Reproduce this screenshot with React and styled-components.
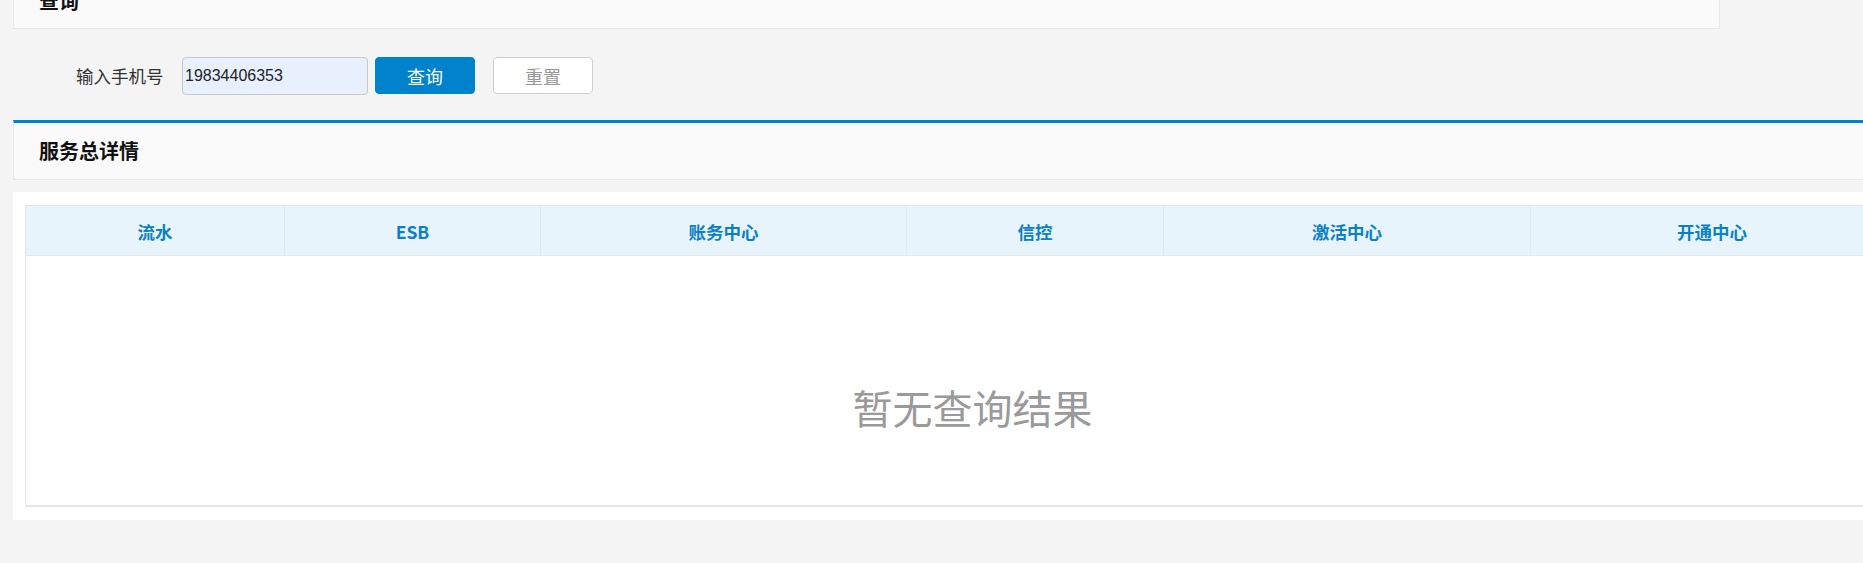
import React from "react";
import styled, { createGlobalStyle } from "styled-components";

const Global = createGlobalStyle`
  html, body { margin: 0; padding: 0; background: #f4f4f4; overflow: hidden; }
  body { font-family: "Liberation Sans", "Noto Sans CJK SC", sans-serif; }
  #root { width: 1863px; height: 563px; overflow: hidden; }
`;

const Page = styled.div`
  padding-left: 13px;
  width: 1900px;
  display: flex;
  flex-direction: column;
  align-items: flex-start;
`;

const Panel = styled.div`
  box-sizing: border-box;
  width: ${(p) => p.$width}px;
  height: ${(p) => p.$height}px;
  margin-top: ${(p) => p.$offset || 0}px;
  background: #fafafa;
  border: 1px solid #e8e8e8;
  border-top: 3px solid ${(p) => (p.$accent ? "#0081cc" : "#e8e8e8")};
  display: flex;
  align-items: center;
  padding-left: 25px;
`;

const PanelTitle = styled.h2`
  margin: 0;
  font-family: "Noto Sans CJK SC", sans-serif;
  font-size: 20px;
  line-height: 24px;
  font-weight: 700;
  color: #111;
`;

const FormRow = styled.div`
  height: 91px;
  display: flex;
  align-items: flex-start;
  padding-top: 28px;
  box-sizing: border-box;
`;

const Label = styled.label`
  margin-left: 63px;
  width: 106px;
  font-family: "Noto Sans CJK SC", sans-serif;
  font-size: 17.5px;
  line-height: 38px;
  color: #333;
`;

const Input = styled.input`
  box-sizing: border-box;
  width: 186px;
  height: 38px;
  margin: 0;
  padding: 0 2px;
  background: #e8f0fe;
  border: 1px solid #c8c8c8;
  border-radius: 4px;
  font-family: "Liberation Sans", sans-serif;
  font-size: 16px;
  color: #222;
  outline: none;
`;

const Button = styled.button`
  box-sizing: border-box;
  width: 100px;
  height: 37px;
  margin-left: ${(p) => p.$gap}px;
  border-radius: 4px;
  font-family: "Noto Sans CJK SC", sans-serif;
  font-size: 18px;
  line-height: 1;
  cursor: pointer;
  background: ${(p) => (p.$primary ? "#0083cc" : "#fff")};
  color: ${(p) => (p.$primary ? "#fff" : "#999")};
  border: 1px solid ${(p) => (p.$primary ? "#0083cc" : "#cfcfcf")};
`;

const Card = styled.div`
  box-sizing: border-box;
  margin-top: 12px;
  width: 1893px;
  background: #fff;
  padding: 13px 12px 13px 12px;
`;

const Table = styled.div`
  box-sizing: border-box;
  width: 1869px;
  border: 1px solid #e6e6e6;
  border-bottom: 2px solid #e6e6e6;
`;

const HeadRow = styled.div`
  display: grid;
  grid-template-columns: 258px 256px 366px 257px 367px 1fr;
  height: 49px;
  background: #e8f4fb;
  border-bottom: 1px solid #e3e8eb;
`;

const HeadCell = styled.div`
  display: flex;
  align-items: center;
  justify-content: center;
  padding-top: 2px;
  box-sizing: border-box;
  font-family: "Noto Sans CJK SC", sans-serif;
  font-size: 17.5px;
  font-weight: 700;
  color: #0a80c8;
  border-left: ${(p) => (p.$first ? "none" : "1px solid #dfe9ef")};
`;

const Empty = styled.div`
  height: 249px;
  box-sizing: border-box;
  padding-top: 126px;
  padding-left: 26px;
  text-align: center;
  font-family: "Noto Sans CJK SC", sans-serif;
  font-size: 40px;
  line-height: 50px;
  color: #9a9a9a;
`;

const columns = ["流水", "ESB", "账务中心", "信控", "激活中心", "开通中心"];

export default function App() {
  return (
    <>
      <Global />
      <Page>
        <Panel $width={1707} $height={58} $offset={-29}>
          <PanelTitle>查询</PanelTitle>
        </Panel>
        <FormRow>
          <Label>输入手机号</Label>
          <Input defaultValue="19834406353" />
          <Button $primary $gap={7}>查询</Button>
          <Button $gap={18}>重置</Button>
        </FormRow>
        <Panel $width={1893} $height={60} $accent>
          <PanelTitle>服务总详情</PanelTitle>
        </Panel>
        <Card>
          <Table>
            <HeadRow>
              {columns.map((c, i) => (
                <HeadCell key={c} $first={i === 0}>{c}</HeadCell>
              ))}
            </HeadRow>
            <Empty>暂无查询结果</Empty>
          </Table>
        </Card>
      </Page>
    </>
  );
}
